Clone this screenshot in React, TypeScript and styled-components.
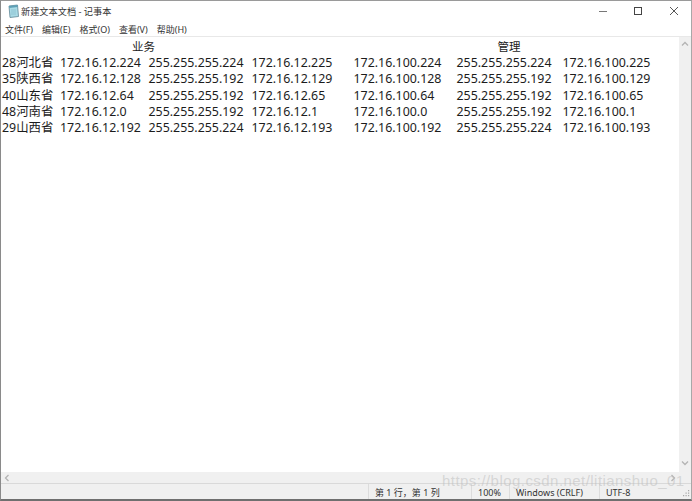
import React from "react";
import styled, { createGlobalStyle } from "styled-components";

const Global = createGlobalStyle`
  html, body { margin: 0; padding: 0; background: #fff; overflow: hidden; }
  #root { width: 692px; height: 501px; }
`;

const FONT = `"Noto Sans", "Noto Sans CJK SC", "Liberation Sans", sans-serif`;

const Window = styled.div`
  position: relative;
  width: 692px;
  height: 501px;
  box-sizing: border-box;
  display: flex;
  flex-direction: column;
  background: #fff;
  border-left: 1px solid #8a8a8a;
  border-right: 1px solid #a8a8a8;
  border-top: 1px solid #9a9a9a;
  border-bottom: 2px solid #6f6f6f;
  font-family: ${FONT};
  color: #1a1a1a;
  overflow: hidden;
`;

const TitleBar = styled.div`
  height: 20px;
  display: flex;
  align-items: center;
  padding-left: 5px;
  flex: none;
`;

const TitleIcon = styled.svg`
  width: 14px;
  height: 15px;
  flex: none;
`;

const Title = styled.span`
  font-size: 9.2px;
  margin-left: 1px;
  color: #333;
  flex: 1;
`;

const WinButton = styled.div`
  width: 35px;
  height: 20px;
  display: flex;
  align-items: center;
  justify-content: center;
  flex: none;
`;

const MenuBar = styled.div`
  height: 16px;
  box-sizing: border-box;
  display: flex;
  align-items: center;
  padding: 2px 0 0 4px;
  gap: 9px;
  flex: none;
  border-bottom: 1px solid #e8e8e8;
`;

const MenuItem = styled.span`
  font-size: 9px;
  color: #333;
`;

const Middle = styled.div`
  flex: 1;
  display: flex;
  min-height: 0;
`;

const Editor = styled.div`
  flex: 1;
  padding: 2px 0 0 1px;
  display: grid;
  grid-template-columns: 58px 88.5px 103px 102px 103px 106px auto;
  grid-auto-rows: 16.2px;
  align-content: start;
  font-size: 12.4px;
  line-height: 16px;
  color: #1c1c1c;
  white-space: nowrap;
`;

const Heading = styled.div<{ $col: number; $indent: number }>`
  grid-column: ${(p) => p.$col} / span 2;
  padding-left: ${(p) => p.$indent}px;
  font-size: 11.5px;
`;

const Filler = styled.div`
  grid-column: 7;
`;

const Cell = styled.div`
  min-width: 0;
`;

const VScroll = styled.div`
  width: 12px;
  flex: none;
  background: #f0f0f0;
  display: flex;
  flex-direction: column;
  justify-content: space-between;
  align-items: center;
  padding: 3px 0 5px;
  box-sizing: border-box;
`;

const HScroll = styled.div`
  height: 11px;
  flex: none;
  background: #f0f0f0;
  display: flex;
  align-items: center;
  justify-content: space-between;
  padding: 0 14px 0 2px;
`;

const Arrow = styled.svg`
  width: 8px;
  height: 8px;
  flex: none;
  fill: none;
  stroke: #b4b4b4;
  stroke-width: 1.3;
`;

const StatusBar = styled.div`
  height: 16px;
  box-sizing: border-box;
  flex: none;
  background: #f0f0f0;
  border-top: 1px solid #d9d9d9;
  display: flex;
  justify-content: flex-end;
  position: relative;
  font-size: 9px;
  color: #333;
`;

const StatusCell = styled.div<{ $w: number }>`
  width: ${(p) => p.$w}px;
  box-sizing: border-box;
  padding: 1px 0 0 6px;
  border-left: 1px solid #dcdcdc;
  display: flex;
  align-items: center;
  flex: none;
  white-space: pre;
`;

const Grip = styled.svg`
  position: absolute;
  right: 1px;
  bottom: 1px;
  width: 9px;
  height: 9px;
`;

const Watermark = styled.div`
  position: absolute;
  left: 441px;
  top: 471px;
  font-family: "Liberation Sans", sans-serif;
  font-size: 15px;
  letter-spacing: 0.45px;
  color: rgba(190, 190, 190, 0.55);
  white-space: nowrap;
`;

const rows = [
  ["28河北省", "172.16.12.224", "255.255.255.224", "172.16.12.225", "172.16.100.224", "255.255.255.224", "172.16.100.225"],
  ["35陕西省", "172.16.12.128", "255.255.255.192", "172.16.12.129", "172.16.100.128", "255.255.255.192", "172.16.100.129"],
  ["40山东省", "172.16.12.64", "255.255.255.192", "172.16.12.65", "172.16.100.64", "255.255.255.192", "172.16.100.65"],
  ["48河南省", "172.16.12.0", "255.255.255.192", "172.16.12.1", "172.16.100.0", "255.255.255.192", "172.16.100.1"],
  ["29山西省", "172.16.12.192", "255.255.255.224", "172.16.12.193", "172.16.100.192", "255.255.255.224", "172.16.100.193"],
];

const menus = ["文件(F)", "编辑(E)", "格式(O)", "查看(V)", "帮助(H)"];

export default function App() {
  return (
    <>
      <Global />
      <Window>
        <TitleBar>
          <TitleIcon viewBox="0 0 14 15">
            <path d="M3 2 L11.5 1 L12.5 12.5 L4 13.5 Z" fill="#a9dbe6" stroke="#5f8796" strokeWidth="0.8" />
            <path d="M3 2 L11.5 1 L11.7 3 L3.2 4 Z" fill="#5d9fb5" />
            <path d="M5 6h5M5 8h5M5 10h5" stroke="#7fb7c6" strokeWidth="0.6" />
          </TitleIcon>
          <Title>新建文本文档 - 记事本</Title>
          <WinButton>
            <svg width="10" height="10" viewBox="0 0 10 10"><path d="M0 5.5h8" stroke="#777" strokeWidth="1" /></svg>
          </WinButton>
          <WinButton>
            <svg width="10" height="10" viewBox="0 0 10 10"><rect x="0.5" y="1.5" width="7" height="7" fill="none" stroke="#444" strokeWidth="1" /></svg>
          </WinButton>
          <WinButton>
            <svg width="10" height="10" viewBox="0 0 10 10"><path d="M1 1l8 8M9 1l-8 8" stroke="#444" strokeWidth="0.9" /></svg>
          </WinButton>
        </TitleBar>
        <MenuBar>
          {menus.map((m) => (
            <MenuItem key={m}>{m}</MenuItem>
          ))}
        </MenuBar>
        <Middle>
          <Editor>
            <Heading $col={2} $indent={72}>业务</Heading>
            <Heading $col={5} $indent={144}>管理</Heading>
            <Filler />
            {rows.map((r) =>
              r.map((c, i) => <Cell key={r[0] + i}>{c}</Cell>)
            )}
          </Editor>
          <VScroll>
            <Arrow viewBox="0 0 8 8"><path d="M1 5.5 L4 2.5 L7 5.5" /></Arrow>
            <Arrow viewBox="0 0 8 8"><path d="M1 2.5 L4 5.5 L7 2.5" /></Arrow>
          </VScroll>
        </Middle>
        <HScroll>
          <Arrow viewBox="0 0 8 8"><path d="M5.5 1 L2.5 4 L5.5 7" /></Arrow>
          <Arrow viewBox="0 0 8 8"><path d="M2.5 1 L5.5 4 L2.5 7" /></Arrow>
        </HScroll>
        <StatusBar>
          <StatusCell $w={103}>第 1 行，第 1 列</StatusCell>
          <StatusCell $w={38}>100%</StatusCell>
          <StatusCell $w={90}>Windows (CRLF)</StatusCell>
          <StatusCell $w={92}>UTF-8</StatusCell>
          <Grip viewBox="0 0 9 9">
            <path d="M7 1h1.2v1.2H7zM4.5 3.5h1.2v1.2H4.500zM7 3.500h1.200v1.200H7zM2 6h1.200v1.200H2zM4.500 6h1.200v1.200H4.500zM7 6h1.200v1.200H7z" fill="#a8a8a8" />
          </Grip>
        </StatusBar>
        <Watermark>https://blog.csdn.net/litianshuo_01</Watermark>
      </Window>
    </>
  );
}
